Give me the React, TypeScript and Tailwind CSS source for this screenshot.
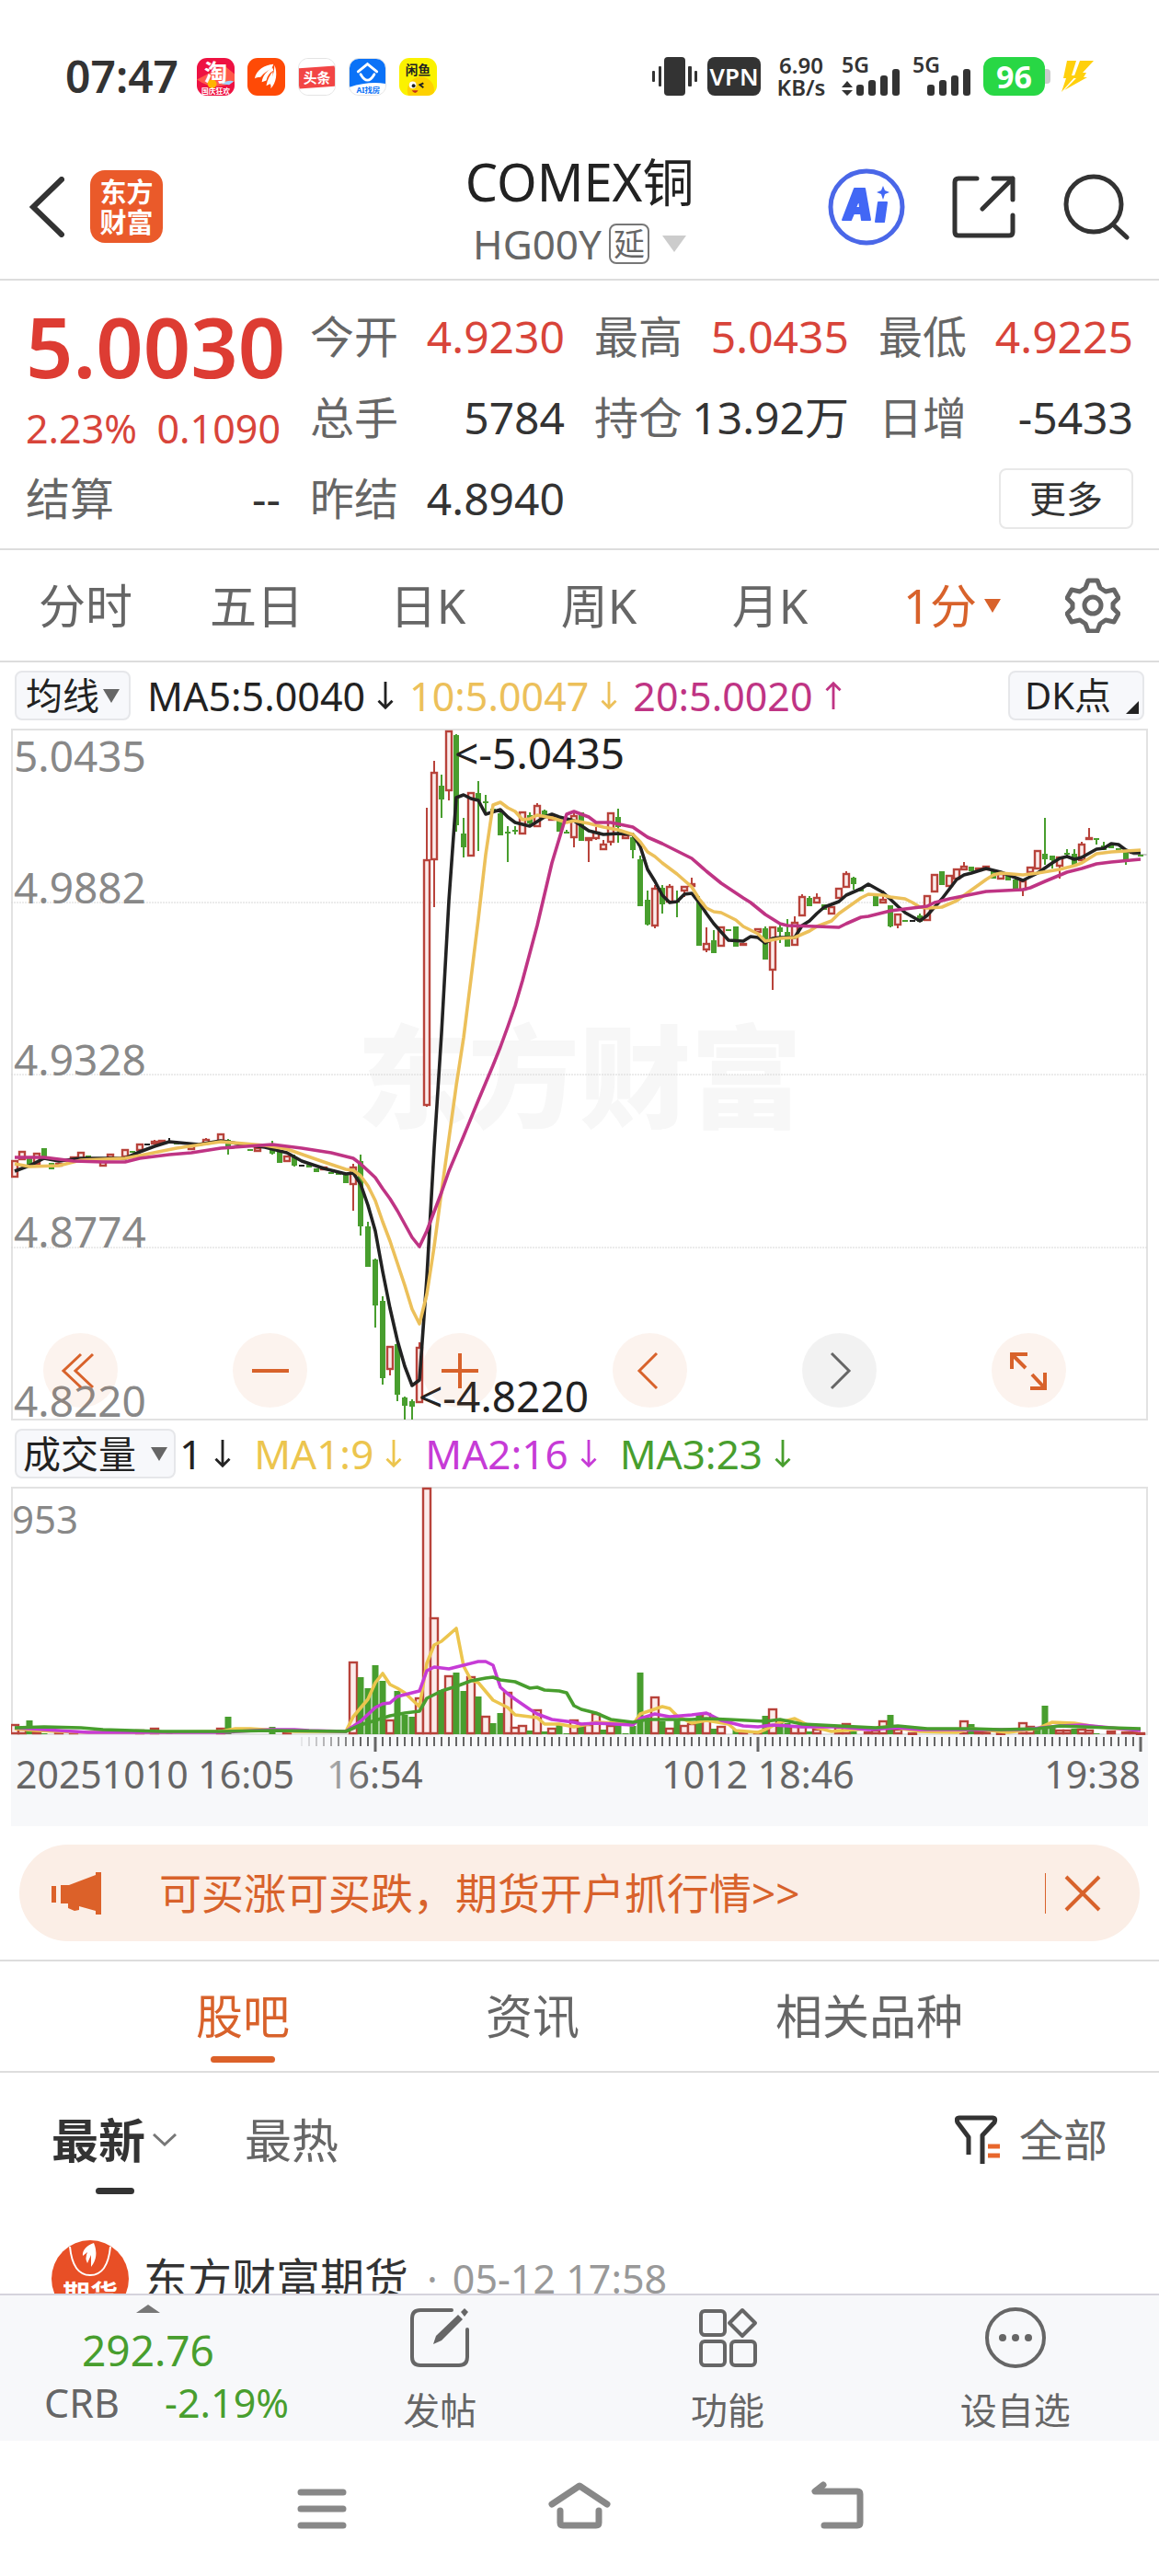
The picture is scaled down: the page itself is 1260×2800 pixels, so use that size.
import type { ReactNode } from "react";

type Kind = "r" | "g" | "k";
type Candle = [number, Kind, number, number, number, number];
type Volume = [number, Kind, number];
type Point = [number, number];

const RED = "#b8433b";
const GREEN = "#489e2e";
const COLORS: Record<Kind, string> = { r: RED, g: GREEN, k: "#222222" };

// Slot, direction, high, body top, body bottom, low
const candles: Candle[] = [
  [0, "r", 482, 482, 499, 499],
  [1, "r", 472, 472, 480, 480],
  [2, "g", 478, 478, 486, 486],
  [3, "r", 474, 474, 485, 485],
  [4, "g", 468, 468, 479, 479],
  [5, "g", 484, 484, 491, 491],
  [6, "r", 485, 485, 487, 487],
  [8, "r", 478, 478, 480, 480],
  [9, "r", 473, 473, 480, 480],
  [10, "g", 476, 476, 479, 479],
  [12, "r", 483, 483, 487, 487],
  [13, "r", 475, 475, 478, 478],
  [15, "r", 470, 470, 477, 477],
  [16, "g", 471, 471, 473, 473],
  [17, "r", 463, 464, 470, 470],
  [18, "k", 463, 463, 465, 465],
  [19, "r", 459, 461, 463, 463],
  [20, "r", 460, 460, 462, 462],
  [21, "k", 457, 460, 462, 462],
  [22, "g", 462, 462, 464, 464],
  [24, "r", 465, 466, 469, 470],
  [26, "r", 457, 459, 463, 463],
  [28, "r", 453, 453, 460, 460],
  [29, "g", 458, 459, 466, 475],
  [31, "g", 464, 464, 465, 465],
  [32, "g", 469, 469, 471, 471],
  [33, "r", 467, 468, 471, 471],
  [35, "g", 460, 463, 474, 475],
  [36, "g", 470, 470, 484, 484],
  [37, "r", 477, 477, 482, 482],
  [38, "g", 475, 477, 487, 488],
  [39, "k", 486, 486, 488, 488],
  [40, "g", 486, 486, 489, 489],
  [41, "g", 490, 490, 494, 494],
  [42, "r", 488, 489, 491, 491],
  [43, "g", 494, 494, 496, 496],
  [44, "g", 495, 495, 497, 497],
  [45, "g", 495, 495, 506, 506],
  [46, "r", 485, 489, 507, 536],
  [47, "g", 475, 482, 553, 563],
  [48, "g", 548, 553, 597, 597],
  [49, "g", 588, 589, 639, 663],
  [50, "g", 629, 634, 718, 725],
  [51, "r", 683, 684, 708, 715],
  [52, "g", 680, 681, 736, 743],
  [53, "g", 738, 739, 748, 763],
  [54, "g", 741, 743, 749, 763],
  [55, "r", 679, 685, 744, 745],
  [56, "r", 98, 155, 421, 423],
  [57, "r", 47, 60, 154, 206],
  [58, "g", 62, 74, 89, 109],
  [59, "r", 14, 15, 79, 90],
  [60, "g", 18, 19, 117, 124],
  [61, "g", 109, 126, 141, 152],
  [62, "r", 81, 82, 150, 151],
  [63, "g", 69, 82, 91, 145],
  [64, "g", 84, 91, 93, 105],
  [65, "g", 99, 99, 101, 101],
  [66, "g", 103, 104, 128, 128],
  [67, "g", 118, 124, 126, 157],
  [68, "g", 118, 122, 124, 127],
  [69, "r", 102, 103, 126, 127],
  [70, "g", 103, 106, 115, 118],
  [71, "r", 93, 96, 118, 119],
  [72, "g", 100, 101, 107, 107],
  [73, "r", 107, 108, 111, 111],
  [74, "g", 108, 109, 124, 124],
  [75, "g", 122, 124, 126, 126],
  [76, "r", 104, 107, 130, 141],
  [77, "g", 103, 103, 134, 134],
  [78, "r", 130, 131, 133, 157],
  [79, "r", 119, 125, 131, 133],
  [80, "r", 133, 138, 143, 143],
  [81, "r", 104, 104, 135, 139],
  [82, "g", 99, 108, 119, 136],
  [83, "r", 127, 128, 131, 131],
  [84, "g", 125, 130, 144, 153],
  [85, "g", 150, 154, 205, 205],
  [86, "g", 188, 198, 225, 226],
  [87, "r", 182, 186, 226, 229],
  [88, "g", 182, 185, 203, 213],
  [89, "r", 181, 184, 200, 200],
  [90, "g", 188, 199, 201, 217],
  [91, "r", 183, 184, 188, 195],
  [92, "r", 174, 181, 183, 184],
  [93, "g", 194, 198, 248, 248],
  [94, "r", 228, 246, 252, 255],
  [95, "g", 231, 242, 256, 256],
  [96, "r", 228, 228, 248, 248],
  [97, "g", 230, 230, 232, 232],
  [98, "g", 227, 227, 249, 249],
  [99, "r", 246, 246, 247, 247],
  [101, "r", 229, 230, 233, 233],
  [102, "g", 227, 229, 263, 263],
  [103, "r", 228, 228, 274, 296],
  [104, "g", 225, 228, 233, 245],
  [105, "g", 219, 233, 249, 249],
  [106, "r", 216, 223, 247, 247],
  [107, "r", 192, 195, 215, 215],
  [108, "g", 194, 196, 205, 205],
  [109, "r", 191, 196, 201, 201],
  [110, "g", 203, 203, 209, 209],
  [111, "r", 206, 206, 213, 213],
  [112, "r", 185, 186, 196, 196],
  [113, "r", 167, 170, 184, 184],
  [114, "g", 173, 174, 181, 187],
  [115, "g", 185, 185, 189, 189],
  [117, "g", 193, 193, 205, 205],
  [118, "r", 188, 198, 201, 201],
  [119, "g", 204, 204, 227, 228],
  [120, "r", 214, 214, 225, 229],
  [121, "g", 220, 220, 222, 222],
  [122, "k", 220, 220, 222, 222],
  [123, "g", 213, 215, 222, 222],
  [124, "r", 194, 194, 220, 220],
  [125, "r", 170, 171, 189, 189],
  [126, "g", 167, 167, 182, 182],
  [127, "r", 171, 172, 183, 183],
  [128, "r", 164, 165, 175, 175],
  [129, "r", 157, 162, 165, 165],
  [130, "g", 162, 162, 167, 167],
  [131, "r", 164, 164, 166, 166],
  [132, "r", 161, 162, 165, 165],
  [133, "g", 167, 167, 175, 175],
  [134, "r", 170, 170, 175, 175],
  [135, "g", 171, 171, 177, 177],
  [136, "g", 175, 176, 186, 186],
  [137, "r", 177, 178, 187, 194],
  [138, "r", 162, 163, 168, 168],
  [139, "r", 145, 145, 164, 164],
  [140, "g", 109, 148, 154, 160],
  [141, "g", 150, 150, 155, 164],
  [142, "r", 151, 152, 161, 175],
  [143, "g", 143, 147, 149, 152],
  [144, "g", 143, 148, 160, 160],
  [145, "r", 135, 138, 155, 155],
  [146, "r", 120, 131, 132, 132],
  [147, "g", 131, 131, 133, 138],
  [148, "g", 135, 139, 144, 144],
  [149, "g", 137, 137, 142, 142],
  [150, "g", 142, 142, 145, 145],
  [151, "g", 145, 145, 156, 160],
  [152, "r", 146, 146, 147, 147],
  [153, "g", 149, 149, 151, 151],
];

const ma5: Point[] = [
  [0, 493], [2, 487], [4, 479], [6, 482], [9, 479], [15, 479], [17, 472], [19, 466], [21, 461], [25, 464],
  [28, 460], [31, 464], [34, 467], [37, 473], [39, 482], [42, 490], [45, 496], [46, 495], [47, 507], [48, 530],
  [49, 558], [50, 602], [51, 642], [52, 677], [53, 705], [54, 726], [55, 720], [56, 609], [57, 468], [58, 343],
  [59, 199], [60, 87], [61, 84], [62, 88], [63, 90], [64, 105], [66, 100], [67, 108], [68, 114], [70, 118],
  [71, 113], [72, 108], [73, 105], [74, 108], [76, 112], [78, 123], [80, 127], [82, 126], [84, 127], [85, 140],
  [86, 165], [87, 178], [88, 193], [89, 201], [90, 200], [91, 192], [92, 191], [93, 201], [94, 213], [95, 224],
  [96, 233], [97, 242], [99, 243], [100, 238], [101, 239], [102, 245], [103, 240], [104, 239], [106, 239],
  [107, 226], [108, 221], [109, 213], [110, 206], [112, 200], [113, 193], [115, 186], [116, 181], [118, 190],
  [120, 205], [121, 212], [123, 221], [124, 215], [126, 197], [128, 176], [129, 171], [130, 169], [132, 164],
  [134, 168], [135, 171], [137, 177], [139, 169], [141, 158], [142, 153], [143, 151], [144, 154], [145, 152],
  [147, 143], [148, 142], [149, 137], [150, 138], [151, 144], [152, 147], [153, 147],
];

const ma10: Point[] = [
  [0, 485], [2, 488], [6, 487], [9, 481], [15, 479], [17, 476], [22, 468], [28, 461], [34, 465], [37, 469],
  [42, 483], [45, 491], [46, 492], [47, 498], [48, 509], [49, 525], [50, 548], [51, 569], [53, 617], [54, 643],
  [55, 659], [56, 627], [57, 575], [58, 515], [59, 458], [60, 400], [61, 348], [62, 284], [63, 219], [64, 149],
  [65, 95], [66, 92], [67, 98], [68, 102], [69, 111], [70, 110], [71, 106], [73, 109], [75, 114], [76, 112],
  [78, 115], [80, 119], [82, 122], [84, 127], [85, 135], [86, 146], [87, 151], [88, 158], [90, 170], [91, 177],
  [92, 184], [93, 197], [94, 207], [95, 211], [96, 212], [98, 220], [99, 227], [101, 235], [102, 243],
  [104, 240], [106, 239], [108, 232], [109, 227], [111, 221], [112, 213], [115, 196], [116, 192], [118, 193],
  [119, 195], [121, 197], [122, 201], [123, 206], [124, 207], [126, 206], [128, 199], [132, 176], [133, 171],
  [134, 169], [137, 171], [139, 169], [142, 165], [144, 161], [145, 158], [147, 148], [149, 146], [153, 144],
];

const ma20: Point[] = [
  [0, 478], [4, 478], [8, 482], [12, 483], [15, 483], [17, 479], [21, 475], [24, 473], [28, 468], [35, 464],
  [39, 468], [43, 473], [46, 479], [47, 485], [49, 500], [50, 512], [51, 523], [52, 536], [54, 565], [55, 575],
  [56, 558], [58, 516], [59, 493], [61, 455], [63, 416], [65, 378], [66, 358], [67, 336], [68, 313], [69, 286],
  [71, 226], [73, 158], [75, 105], [76, 102], [78, 108], [79, 114], [81, 114], [84, 119], [86, 130], [88, 137],
  [92, 153], [94, 167], [96, 180], [99, 196], [100, 201], [102, 214], [104, 224], [105, 226], [109, 227],
  [112, 228], [113, 224], [115, 217], [116, 216], [119, 210], [122, 207], [124, 205], [125, 201], [127, 197],
  [132, 189], [137, 187], [138, 185], [140, 178], [143, 168], [145, 164], [147, 159], [149, 157], [153, 154],
];

const volumes: Volume[] = [
  [0, "r", 10], [1, "r", 5], [2, "g", 15], [3, "r", 2], [4, "g", 1], [6, "r", 2], [8, "r", 2], [17, "r", 4],
  [19, "r", 6], [21, "g", 3], [28, "r", 6], [29, "g", 19], [35, "g", 8], [37, "r", 3], [46, "r", 78],
  [47, "g", 62], [48, "g", 50], [49, "g", 75], [50, "g", 58], [51, "r", 15], [52, "g", 47], [53, "g", 21],
  [54, "g", 19], [55, "r", 39], [56, "r", 267], [57, "r", 126], [58, "g", 48], [59, "r", 63], [60, "g", 67],
  [61, "g", 47], [62, "r", 62], [63, "g", 41], [64, "r", 19], [65, "g", 12], [66, "g", 23], [67, "r", 45],
  [68, "r", 7], [69, "r", 9], [70, "g", 4], [71, "r", 26], [72, "g", 3], [73, "r", 6], [74, "g", 10],
  [75, "g", 1], [76, "r", 15], [77, "g", 12], [78, "r", 10], [79, "r", 22], [80, "g", 5], [81, "r", 9],
  [82, "g", 16], [83, "g", 1], [84, "g", 9], [85, "g", 67], [86, "g", 18], [87, "r", 40], [88, "g", 14],
  [89, "r", 6], [90, "g", 15], [91, "r", 9], [92, "r", 11], [93, "g", 23], [94, "r", 22], [95, "g", 6],
  [96, "r", 8], [98, "g", 5], [99, "r", 2], [101, "r", 2], [102, "g", 20], [103, "r", 27], [104, "g", 12],
  [105, "g", 12], [106, "r", 8], [107, "r", 8], [108, "g", 3], [109, "r", 5], [112, "r", 7], [113, "r", 11],
  [114, "g", 3], [116, "r", 2], [117, "r", 4], [118, "r", 14], [119, "g", 21], [120, "r", 5], [122, "r", 1],
  [129, "r", 14], [130, "g", 11], [131, "r", 3], [132, "r", 2], [134, "r", 1], [137, "r", 12], [138, "r", 8],
  [139, "g", 6], [140, "g", 31], [141, "g", 7], [142, "r", 4], [143, "r", 4], [144, "g", 6], [145, "r", 5],
  [146, "r", 4], [147, "g", 1], [149, "r", 3], [151, "r", 2], [152, "r", 2], [153, "r", 1],
];

const volMa1: Point[] = [
  [0, 5], [3, 3], [6, 2], [10, 1], [20, 1], [28, 2], [30, 5], [32, 5], [34, 4], [38, 2], [45, 2], [46, 18],
  [48, 37], [49, 55], [50, 65], [51, 53], [52, 49], [53, 44], [55, 29], [56, 76], [57, 96], [58, 100], [60, 114],
  [61, 73], [62, 58], [63, 55], [65, 36], [67, 28], [68, 20], [71, 17], [72, 10], [74, 10], [76, 7], [78, 10],
  [79, 12], [82, 11], [84, 9], [85, 21], [88, 29], [89, 27], [90, 19], [92, 11], [94, 14], [97, 10], [98, 3],
  [101, 1], [102, 4], [104, 12], [106, 16], [108, 8], [111, 2], [116, 5], [119, 7], [123, 2], [128, 1], [130, 5],
  [135, 1], [139, 5], [141, 12], [144, 11], [147, 7], [153, 3],
];

const volMa2: Point[] = [
  [0, 6], [6, 3], [10, 1], [28, 1], [35, 4], [38, 4], [40, 3], [45, 2], [47, 13], [49, 28], [50, 32], [51, 33],
  [52, 40], [55, 46], [56, 68], [57, 72], [59, 70], [61, 74], [63, 78], [64, 78], [65, 74], [66, 50], [67, 43],
  [68, 37], [70, 26], [71, 21], [73, 15], [76, 12], [77, 10], [79, 11], [84, 9], [85, 16], [87, 21], [89, 18],
  [92, 20], [94, 22], [96, 14], [99, 8], [101, 7], [103, 9], [107, 7], [112, 7], [116, 4], [120, 6], [123, 4],
  [130, 4], [137, 4], [142, 8], [145, 9], [149, 6], [153, 3],
];

const volMa3: Point[] = [
  [0, 6], [4, 7], [9, 6], [12, 4], [20, 2], [28, 2], [35, 3], [45, 2], [47, 9], [51, 19], [53, 22], [55, 24],
  [56, 38], [58, 46], [60, 51], [62, 57], [64, 60], [65, 61], [66, 58], [68, 56], [70, 49], [71, 50], [72, 47],
  [74, 46], [75, 44], [76, 30], [77, 26], [79, 22], [81, 15], [84, 12], [86, 15], [92, 15], [94, 16], [97, 15],
  [102, 13], [104, 15], [107, 10], [112, 8], [117, 6], [120, 8], [124, 5], [130, 5], [134, 4], [139, 5],
  [142, 8], [145, 7], [153, 5],
];

const slotX = (slot: number) => 16 + slot * 8;

const toPoints = (series: Point[], map = (v: number) => v) =>
  series.map(([slot, v]) => `${slotX(slot)},${map(v)}`).join(" ");

const gridLines = [201, 388, 576];
const priceLabels: [string, number][] = [
  ["5.0435", 59],
  ["4.9882", 202],
  ["4.9328", 389],
  ["4.8774", 576],
  ["4.8220", 760],
];

function PriceChart() {
  return (
    <svg viewBox="12 12 1236 752" className="block h-auto w-full" role="img" aria-label="K线">
      <text x="388" y="436" fontSize="121" fontWeight="900" fill="#f7f7f7">
        东方财富
      </text>
      <rect x="13" y="13" width="1234" height="750" fill="none" stroke="#e2e2e2" strokeWidth="2" />
      {gridLines.map((y) => (
        <line key={y} x1="12" x2="1247" y1={y} y2={y} stroke="#d8d8d8" strokeDasharray="2 1" />
      ))}
      {priceLabels.map(([label, y]) => (
        <text key={label} x="15" y={y} fontSize="46" fill="#888888">
          {label}
        </text>
      ))}
      <line x1="1232" x2="1247" y1="149" y2="149" stroke="#c8c8c8" strokeWidth="2" />
      {candles.map(([slot, kind, high, top, bottom, low]) => {
        const x = slotX(slot);
        const color = COLORS[kind];
        return (
          <g key={slot} stroke={color} strokeWidth="2">
            {high < top && <line x1={x} x2={x} y1={high} y2={top} />}
            {low > bottom && <line x1={x} x2={x} y1={bottom} y2={low} />}
            {kind === "r" ? (
              <rect x={x - 3} y={top} width="6" height={bottom - top} fill="#fbeceb" strokeWidth="2.4" />
            ) : (
              <rect x={x - 3} y={top} width="6" height={bottom - top} fill={color} stroke="none" />
            )}
          </g>
        );
      })}
      <g fill="none" strokeWidth="3.6" strokeLinejoin="round">
        <polyline points={toPoints(ma5)} stroke="#222222" />
        <polyline points={toPoints(ma10)} stroke="#ecc05a" />
        <polyline points={toPoints(ma20)} stroke="#bf3484" />
      </g>
      <g fontSize="46" fill="#222222">
        <text x="494" y="56">{"<-5.0435"}</text>
        <text x="455" y="755">{"<-4.8220"}</text>
      </g>
    </svg>
  );
}

function VolumeChart() {
  const base = 269;
  const flip = (v: number) => base - 1 - v;

  return (
    <svg viewBox="12 0 1236 270" className="block h-auto w-full" role="img" aria-label="成交量">
      <rect x="13" y="1" width="1234" height="268" fill="none" stroke="#e2e2e2" strokeWidth="2" />
      <text x="13" y="51" fontSize="42" fill="#888888">
        953
      </text>
      {volumes.map(([slot, kind, height]) => {
        const x = slotX(slot);
        return kind === "r" ? (
          <rect
            key={slot}
            x={x - 4}
            y={base - height}
            width="8"
            height={Math.max(height - 1, 1)}
            fill="#fbeceb"
            stroke={RED}
            strokeWidth="2.4"
          />
        ) : (
          <rect key={slot} x={x - 3.5} y={base - height} width="7" height={height} fill={GREEN} />
        );
      })}
      <g fill="none" strokeWidth="3.6" strokeLinejoin="round">
        <polyline points={toPoints(volMa1, flip)} stroke="#ecc54e" />
        <polyline points={toPoints(volMa2, flip)} stroke="#c63bd6" />
        <polyline points={toPoints(volMa3, flip)} stroke={GREEN} />
      </g>
    </svg>
  );
}

function TimeAxis() {
  const slots = Array.from({ length: 115 }, (_, n) => n + 39);

  return (
    <svg viewBox="12 0 1236 99" className="block h-auto w-full bg-[#f7f8fa]" role="img" aria-label="时间">
      <defs>
        <linearGradient id="axis-fade" gradientUnits="userSpaceOnUse" x1="355" x2="400" y1="0" y2="0">
          <stop offset="0" stopColor="#b5b5b5" />
          <stop offset="1" stopColor="#666666" />
        </linearGradient>
      </defs>
      {slots.map((slot) => {
        const major = slot === 49 || slot === 101 || slot === 153;
        return (
          <line
            key={slot}
            x1={slotX(slot)}
            x2={slotX(slot)}
            y1="2"
            y2={major ? 18 : 12}
            stroke="#666666"
            strokeWidth={major ? 3 : 2}
            opacity={Math.min(1, (slot - 38) / 9)}
          />
        );
      })}
      <g fontSize="41" fill="#666666">
        <text x="17" y="58">20251010 16:05</text>
        <text x="355" y="58" fill="url(#axis-fade)">16:54</text>
        <text x="824" y="58" textAnchor="middle">1012 18:46</text>
        <text x="1240" y="58" textAnchor="end">19:38</text>
      </g>
    </svg>
  );
}

function Arrow({ up = false }: { up?: boolean }) {
  return (
    <svg viewBox="0 0 20 34" className="mx-3 h-8 w-5 shrink-0" fill="none" stroke="currentColor" strokeWidth="3">
      {up ? <path d="M10 33V3M2 11l8-8 8 8" /> : <path d="M10 1v30M2 23l8 8 8-8" />}
    </svg>
  );
}

function Caret({ className }: { className: string }) {
  return (
    <svg viewBox="0 0 18 14" preserveAspectRatio="none" className={className} fill="currentColor">
      <path d="M0 0h18L9 14z" />
    </svg>
  );
}

function StatusBar() {
  return (
    <div className="mt-[62px] flex h-[42px] shrink-0 items-center justify-between pr-[70px] pl-[71px] text-[#333333]">
      <div className="flex items-center gap-[14px]">
        <span className="mr-[6px] text-[48px] font-semibold leading-[42px]">07:47</span>
        <svg viewBox="0 0 42 42" className="size-[41px] rounded-[11px]">
          <rect width="42" height="42" fill="#ee1142" />
          <path d="M0 24q20 14 42 2v-8L30 8 8 20z" fill="#ff5a4a" />
          <circle cx="17" cy="29" r="5" fill="#ffb400" />
          <path d="M27 29q8-5 14-3l-5 4z" fill="#9fd3ff" />
          <text x="8" y="26" fontSize="26" fontWeight="700" fill="#ffffff">淘</text>
          <text x="5" y="40" fontSize="8" fontWeight="700" fill="#ffffff">国庆狂欢</text>
        </svg>
        <svg viewBox="0 0 42 42" className="size-[41px] rounded-[11px]">
          <rect width="42" height="42" fill="#ff4a06" />
          <path d="M29 7C19 8 10 13 8 23c3-2 5-1 7-2 3-4 7-7 12-9z" fill="#ffffff" />
          <path d="M28 11c-6 3-11 8-12 16l5-2c1-5 4-9 8-11z" fill="#ffffff" />
          <path d="M30 8c4 9 2 20-4 26 1-4-1-5-2-6 4-6 6-12 6-20z" fill="#ffffff" />
          <path d="M28 15c-3 4-6 9-7 16l4-2c3-5 4-9 3-14z" fill="#ffffff" />
        </svg>
        <svg viewBox="0 0 42 42" className="size-[41px] rounded-[11px] border border-[#e4e4e4]">
          <rect width="42" height="42" fill="#ffffff" />
          <path d="M0 11l42-3v24L0 35z" fill="#f24545" />
          <text x="5" y="28" fontSize="16" fontWeight="700" fill="#ffffff">头条</text>
        </svg>
        <svg viewBox="0 0 42 42" className="size-[41px] rounded-[11px] border border-[#e4e4e4]">
          <rect width="42" height="42" fill="#ffffff" />
          <path d="M0 0h42v29q-20-3-42 4z" fill="#0b72f7" />
          <path d="M10 15L21 6l11 9M13 18q8 14 16 0" fill="none" stroke="#ffffff" strokeWidth="3" strokeLinecap="round" />
          <text x="8" y="40" fontSize="9" fontWeight="700" fill="#0b72f7">AI找房</text>
        </svg>
        <svg viewBox="0 0 42 42" className="size-[41px] rounded-[11px]">
          <rect width="42" height="42" fill="#fbf200" />
          <circle cx="24" cy="36" r="15" fill="#fed100" />
          <circle cx="15" cy="30" r="4" fill="#ffffff" />
          <circle cx="16" cy="31" r="2" fill="#222222" />
          <path d="M27 28l-4 2 4 3" fill="none" stroke="#222222" strokeWidth="2" />
          <path d="M14 36h7q-3 6-7 0z" fill="#c33018" />
          <text x="7" y="18" fontSize="14" fontWeight="700" fill="#222222">闲鱼</text>
        </svg>
      </div>
      <div className="flex items-center">
        <svg viewBox="0 0 50 42" className="h-[42px] w-[50px]" fill="#333333">
          <rect x="13" width="23" height="42" rx="4" />
          <rect x="7" y="10" width="3" height="22" rx="1" />
          <rect x="0" y="15" width="3" height="12" rx="1" />
          <rect x="39" y="10" width="4" height="22" rx="1" />
          <rect x="46" y="15" width="3" height="12" rx="1" />
        </svg>
        <span className="ml-[10px] flex h-[42px] w-[58px] items-center justify-center rounded-lg bg-[#333333] text-[26px] font-semibold text-white">
          VPN
        </span>
        <span className="ml-4 flex w-[56px] flex-col text-center text-[24px] font-semibold leading-[24px]">
          <span>6.90</span>
          <span>KB/s</span>
        </span>
        <svg viewBox="0 0 65 42" className="ml-4 h-[42px] w-[65px] overflow-visible" fill="#333333">
          <text x="0" y="17" fontSize="23" fontWeight="600">5G</text>
          <path d="M0 33l6-7 6 7zM0 36h12l-6 6z" />
          <rect x="16" y="30" width="8" height="12" rx="3" />
          <rect x="29" y="25" width="8" height="17" rx="3" />
          <rect x="42" y="20" width="8" height="22" rx="3" />
          <rect x="55" y="13" width="8" height="29" rx="3" />
        </svg>
        <svg viewBox="0 0 65 42" className="ml-3 h-[42px] w-[65px] overflow-visible" fill="#333333">
          <text x="0" y="17" fontSize="23" fontWeight="600">5G</text>
          <rect x="16" y="30" width="8" height="12" rx="3" />
          <rect x="29" y="25" width="8" height="17" rx="3" />
          <rect x="42" y="20" width="8" height="22" rx="3" />
          <rect x="55" y="13" width="8" height="29" rx="3" />
        </svg>
        <span className="ml-3 flex items-center">
          <span className="flex h-[42px] w-[67px] items-center justify-center rounded-xl bg-[#28d745] text-[34px] font-bold text-white">
            96
          </span>
          <span className="h-4 w-[6px] rounded-r bg-[#cccccc]" />
        </span>
        <svg viewBox="0 0 36 36" className="ml-3 size-9" fill="#ffd00c">
          <path d="M6 1h10l-5 16h5L0 35l5-15H2z" />
          <path d="M20 1h15L23 14h4l-3 5h4L3 33l13-13h-3z" />
        </svg>
      </div>
    </div>
  );
}

function Header() {
  return (
    <header className="mt-[60px] flex h-[141px] shrink-0 items-start justify-between border-b-2 border-[#dddddd] px-8">
      <div className="flex h-[121px] flex-1 items-center gap-7">
        <button type="button" aria-label="返回">
          <svg viewBox="0 0 38 66" className="h-[66px] w-[38px]" fill="none" stroke="#333333" strokeWidth="6">
            <path d="M35 3L4 33l31 30" strokeLinecap="round" />
          </svg>
        </button>
        <a
          href="#home"
          className="flex size-[79px] flex-col items-center justify-center rounded-2xl bg-[#ea5a2a] text-[29px] font-bold leading-[33px] text-white"
        >
          <span>东方</span>
          <span>财富</span>
        </a>
      </div>
      <div className="flex flex-col items-center">
        <h1 className="text-[56px] leading-[66px] text-[#222222]">COMEX铜</h1>
        <button type="button" className="flex items-center text-[#666666]">
          <span className="text-[44px] leading-[70px]">HG00Y</span>
          <span className="ml-2 flex size-[44px] items-center justify-center rounded-lg border-2 border-[#777777] text-[34px] leading-none">
            延
          </span>
          <Caret className="ml-[14px] h-[18px] w-[26px] text-[#cccccc]" />
        </button>
      </div>
      <div className="flex h-[121px] flex-1 items-center justify-end gap-[51px]">
        <button type="button" aria-label="AI">
          <svg viewBox="0 0 84 84" className="size-[84px]" fill="#4267f5">
            <circle cx="42" cy="42" r="39" fill="none" stroke="#4a67e8" strokeWidth="5" />
            <path
              d="M29 22h11l6 34h-9l-1-7h-8l-3 7h-9zM34 33l-4 10h5z"
              fillRule="evenodd"
              stroke="#4267f5"
              strokeWidth="2"
              strokeLinejoin="round"
            />
            <path d="M55 37h9l-3 21h-9z" stroke="#4267f5" strokeWidth="2" strokeLinejoin="round" />
            <path d="M60 19l2 5 5 2-5 2-2 6-2-6-5-2 5-2z" />
          </svg>
        </button>
        <button type="button" aria-label="分享">
          <svg
            viewBox="0 0 70 70"
            className="size-[70px]"
            fill="none"
            stroke="#333333"
            strokeWidth="5"
            strokeLinecap="round"
            strokeLinejoin="round"
          >
            <path d="M27 4H7q-4 0-4 4v54q0 4 4 4h55q4 0 4-4V44M45 4h21v23M66 4L33 37" />
          </svg>
        </button>
        <button type="button" aria-label="搜索">
          <svg viewBox="0 0 72 72" className="size-[72px]" fill="none" stroke="#333333" strokeWidth="5" strokeLinecap="round">
            <circle cx="33" cy="33" r="30" />
            <path d="M54 55l15 14" />
          </svg>
        </button>
      </div>
    </header>
  );
}

interface StatProps {
  label: string;
  value: string;
  rising?: boolean;
}

function Stat({ label, value, rising }: StatProps) {
  return (
    <dl className="flex h-[88px] items-center justify-between text-[48px] whitespace-nowrap">
      <dt className="text-[#666666]">{label}</dt>
      <dd className={rising ? "text-[#d8443a]" : "text-[#333333]"}>{value}</dd>
    </dl>
  );
}

function Quote() {
  return (
    <section className="grid shrink-0 grid-cols-4 gap-x-8 border-b-2 border-[#dddddd] px-7 pt-[17px] pb-[10px] leading-none">
      <div className="row-span-2 pt-2 text-[#dd3c33]">
        <p className="text-[90px] font-semibold leading-[92px]">5.0030</p>
        <p className="mt-4 flex justify-between text-[43px] leading-[56px] text-[#d8443a]">
          <span>2.23%</span>
          <span>0.1090</span>
        </p>
      </div>
      <Stat label="今开" value="4.9230" rising />
      <Stat label="最高" value="5.0435" rising />
      <Stat label="最低" value="4.9225" rising />
      <Stat label="总手" value="5784" />
      <Stat label="持仓" value="13.92万" />
      <Stat label="日增" value="-5433" />
      <Stat label="结算" value="--" />
      <Stat label="昨结" value="4.8940" />
      <div className="col-start-4 flex items-center justify-end">
        <button type="button" className="h-[66px] rounded-lg border-2 border-[#e8e8e8] px-[31px] text-[40px] text-[#333333]">
          更多
        </button>
      </div>
    </section>
  );
}

function PeriodTabs() {
  return (
    <nav className="flex h-[122px] shrink-0 items-center border-b-2 border-[#dddddd] text-[51px] text-[#666666]">
      {["分时", "五日", "日K", "周K", "月K"].map((label) => (
        <button key={label} type="button" className="flex-1">
          {label}
        </button>
      ))}
      <button type="button" className="flex flex-1 items-center justify-center gap-2 text-[#d8622b]">
        <span className="ml-6">1分</span>
        <Caret className="h-[15px] w-[18px]" />
      </button>
      <button type="button" aria-label="设置" className="flex w-36 justify-center">
        <svg viewBox="0 0 60 60" className="size-[60px]" fill="none" stroke="#666666" strokeWidth="5" strokeLinejoin="round">
          <path d="M25 3h10l3 8 6 4 9-2 5 9-6 6v5l6 6-5 9-9-2-6 4-3 8H25l-3-8-6-4-9 2-5-9 6-6v-5l-6-6 5-9 9 2 6-4z" />
          <circle cx="30" cy="30" r="9" />
        </svg>
      </button>
    </nav>
  );
}

function RoundButton({ label, muted, children }: { label: string; muted?: boolean; children: ReactNode }) {
  return (
    <button
      type="button"
      aria-label={label}
      className={
        muted
          ? "flex size-[81px] items-center justify-center rounded-full bg-black/5 text-[#666666]"
          : "flex size-[81px] items-center justify-center rounded-full bg-[#dc6420]/8 text-[#d8622b]"
      }
    >
      <svg viewBox="0 0 44 44" className="size-11" fill="none" stroke="currentColor" strokeWidth="4">
        {children}
      </svg>
    </button>
  );
}

function ChartControls() {
  return (
    <div className="absolute right-[89px] bottom-[14px] left-[35px] flex justify-between">
      <RoundButton label="最早">
        <path d="M22 4L3 22l19 18M35 4L16 22l19 18" strokeWidth="3" />
      </RoundButton>
      <RoundButton label="缩小">
        <path d="M2 22h40" />
      </RoundButton>
      <RoundButton label="放大">
        <path d="M2 22h40M22 3v38" />
      </RoundButton>
      <RoundButton label="向前">
        <path d="M30 3L11 22l19 19" strokeWidth="3" />
      </RoundButton>
      <RoundButton label="向后" muted>
        <path d="M14 3l19 19-19 19" strokeWidth="3" />
      </RoundButton>
      <RoundButton label="全屏">
        <path d="M4 20V4h17M4 4l15 15M40 24v17H24M40 41L26 26" strokeWidth="4" />
      </RoundButton>
    </div>
  );
}

function Charts() {
  return (
    <section className="shrink-0 px-3 leading-none">
      <div className="flex h-[72px] items-center pr-1 pl-1 text-[43px] whitespace-nowrap">
        <button
          type="button"
          className="mr-[18px] flex h-[54px] items-center gap-1 rounded-lg border-2 border-[#e6e7ea] bg-[#f7f8fb] px-[10px] text-[40px] text-[#222222]"
        >
          均线
          <Caret className="h-[15px] w-[18px] text-[#666666]" />
        </button>
        <span className="flex items-center text-[#222222]">
          MA5:5.0040
          <Arrow />
        </span>
        <span className="ml-1 flex items-center text-[#ecc05a]">
          10:5.0047
          <Arrow />
        </span>
        <span className="ml-1 flex items-center text-[#bf3484]">
          20:5.0020
          <Arrow up />
        </span>
        <button
          type="button"
          className="ml-auto flex h-[54px] items-end rounded-lg border-2 border-[#e6e7ea] bg-[#f7f8fb] pr-1 pb-[5px] pl-4 text-[40px] text-[#222222]"
        >
          DK点
          <svg viewBox="0 0 14 14" className="ml-4 size-[14px]" fill="#222222">
            <path d="M14 0v14H0z" />
          </svg>
        </button>
      </div>
      <div className="relative">
        <PriceChart />
        <ChartControls />
      </div>
      <div className="flex h-[72px] items-center pl-1 text-[44px] whitespace-nowrap">
        <button
          type="button"
          className="mr-1 flex h-[54px] items-center gap-4 rounded-lg border-2 border-[#e6e7ea] bg-[#f7f8fb] px-[7px] text-[41px] text-[#222222]"
        >
          成交量
          <Caret className="h-[15px] w-[18px] text-[#666666]" />
        </button>
        <span className="flex items-center text-[#222222]">
          1
          <Arrow />
        </span>
        <span className="ml-3 flex items-center text-[#ecc54e]">
          MA1:9
          <Arrow />
        </span>
        <span className="ml-3 flex items-center text-[#c63bd6]">
          MA2:16
          <Arrow />
        </span>
        <span className="ml-3 flex items-center text-[#489e2e]">
          MA3:23
          <Arrow />
        </span>
      </div>
      <VolumeChart />
      <TimeAxis />
    </section>
  );
}

function Banner() {
  return (
    <aside className="mx-[21px] mt-5 mb-5 flex h-[105px] shrink-0 items-center rounded-full bg-[#fbeee6] pr-[42px] pl-[35px] text-[#d8622b]">
      <svg viewBox="0 0 54 46" className="h-[46px] w-[54px]" fill="#dc6129">
        <path d="M0 15h5v18H0zM10 14h9L48 3V0h6v46h-6v-4L30 37v4l-5 1-7-3v-5h-8z" />
      </svg>
      <a href="#account" className="ml-[63px] flex-1 text-[46px] whitespace-nowrap">
        可买涨可买跌，期货开户抓行情&gt;&gt;
      </a>
      <button type="button" aria-label="关闭" className="border-l border-[#d8622b] py-[2px] pl-5">
        <svg viewBox="0 0 40 40" className="size-10" fill="none" stroke="currentColor" strokeWidth="4">
          <path d="M2 2l36 36M38 2L2 38" />
        </svg>
      </button>
    </aside>
  );
}

function FeedTabs() {
  return (
    <nav className="flex h-[123px] shrink-0 items-stretch justify-evenly border-y-2 border-[#dddddd] text-[51px] text-[#666666]">
      <button type="button" className="relative text-[#d8622b]">
        股吧
        <span className="absolute inset-x-4 bottom-[9px] h-[7px] rounded-full bg-[#dc6129]" />
      </button>
      <button type="button">资讯</button>
      <button type="button">相关品种</button>
    </nav>
  );
}

function Feed() {
  return (
    <section className="min-h-0 flex-1 overflow-hidden">
      <div className="flex h-[146px] items-center gap-[74px] px-14 text-[51px] text-[#666666]">
        <button type="button" className="relative flex h-full items-center gap-2 font-bold text-[#333333]">
          最新
          <svg viewBox="0 0 26 14" className="h-[14px] w-[26px]" fill="none" stroke="#777777" strokeWidth="3">
            <path d="M1 1l12 11L25 1" />
          </svg>
          <span className="absolute bottom-[14px] left-12 h-[7px] w-[42px] rounded-full bg-[#333333]" />
        </button>
        <button type="button">最热</button>
        <button type="button" className="ml-auto flex items-center gap-5 text-[48px]">
          <svg viewBox="0 0 50 54" className="h-[54px] w-[50px]" fill="none" stroke="#333333" strokeWidth="5">
            <path d="M15 43V24L3 8q-2-5 2-5h36q4 0 2 5L30 22v31" strokeLinejoin="round" />
            <path d="M36 34h13M36 44h13" stroke="#e8672c" />
          </svg>
          全部
        </button>
      </div>
      <article className="flex items-center px-14 pt-9">
        <svg viewBox="0 0 84 84" className="size-[84px] shrink-0">
          <circle cx="42" cy="42" r="42" fill="#e84f26" />
          <path d="M20 7q3 31 22 31T64 7" fill="none" stroke="#ffffff" strokeWidth="2" />
          <path d="M46 3c-7 2-13 8-12 14l5-4q-3 7 0 12l4-9v13q9-11 3-26z" fill="#ffffff" />
          <text x="12" y="70" fontSize="30" fontWeight="700" fill="#ffffff">期货</text>
        </svg>
        <h2 className="ml-4 text-[48px] text-[#333333]">东方财富期货</h2>
        <span className="ml-5 text-[44px] text-[#999999]">·</span>
        <time className="ml-4 text-[43px] text-[#999999]">05-12 17:58</time>
      </article>
    </section>
  );
}

function ActionBar() {
  return (
    <footer className="flex h-[160px] shrink-0 border-t-2 border-[#d5d3dc] bg-[#f7f8fa] text-[40px] leading-none text-[#666666]">
      <a href="#crb" className="flex w-[322px] flex-col items-center pt-[10px]">
        <Caret className="h-[9px] w-[26px] rotate-180 text-[#777777]" />
        <span className="mt-3 text-[46px] leading-[56px] text-[#489e2e]">292.76</span>
        <span className="mr-2 flex w-[266px] justify-between self-end text-[43px] leading-[60px]">
          <span>CRB</span>
          <span className="text-[#489e2e]">-2.19%</span>
        </span>
      </a>
      <button type="button" className="flex flex-1 flex-col items-center gap-[26px] pt-[13px]">
        <svg viewBox="0 0 66 66" className="size-[66px]" fill="none" stroke="#666666" strokeWidth="4" strokeLinecap="round">
          <path d="M46 3H12q-9 0-9 9v42q0 9 9 9h42q9 0 9-9V24" />
          <path d="M26 40l3-9 24-23 5 5-23 23z" fill="#666666" stroke="none" />
          <path d="M56 5l4-4 4 4-4 5z" fill="#666666" stroke="none" />
        </svg>
        发帖
      </button>
      <button type="button" className="flex flex-1 flex-col items-center gap-[26px] pt-[13px]">
        <svg viewBox="0 0 66 66" className="size-[66px]" fill="none" stroke="#666666" strokeWidth="4" strokeLinejoin="round">
          <rect x="4" y="4" width="26" height="26" rx="4" />
          <rect x="4" y="37" width="26" height="26" rx="4" />
          <rect x="37" y="37" width="26" height="26" rx="4" />
          <path d="M49 3l14 14-14 14-14-14z" />
        </svg>
        功能
      </button>
      <button type="button" className="flex flex-1 flex-col items-center gap-[26px] pt-[13px]">
        <svg viewBox="0 0 66 66" className="size-[66px]" fill="#666666">
          <circle cx="33" cy="33" r="31" fill="none" stroke="#666666" strokeWidth="4" />
          <circle cx="19" cy="33" r="4" />
          <circle cx="33" cy="33" r="4" />
          <circle cx="47" cy="33" r="4" />
        </svg>
        设自选
      </button>
    </footer>
  );
}

function SystemNav() {
  return (
    <nav className="grid h-[147px] shrink-0 grid-cols-3 px-[210px] pt-[44px]">
      <button type="button" aria-label="菜单" className="flex items-start justify-center">
        <svg viewBox="0 0 70 52" className="h-[52px] w-[70px]" stroke="#888888" strokeWidth="7" strokeLinecap="round">
          <path d="M12 12h46M12 30h46M12 48h46" />
        </svg>
      </button>
      <button type="button" aria-label="主页" className="flex items-start justify-center">
        <svg
          viewBox="0 0 70 52"
          className="h-[52px] w-[70px]"
          fill="none"
          stroke="#888888"
          strokeWidth="7"
          strokeLinecap="round"
          strokeLinejoin="round"
        >
          <path d="M5 25L35 5l30 20M14 32v13q0 3 3 3h36q3 0 3-3V32" />
        </svg>
      </button>
      <button type="button" aria-label="返回" className="flex items-start justify-center">
        <svg
          viewBox="0 0 70 52"
          className="h-[52px] w-[70px]"
          fill="none"
          stroke="#888888"
          strokeWidth="7"
          strokeLinecap="round"
          strokeLinejoin="round"
        >
          <path d="M20 4l-9 7h46q3 0 3 3v31q0 3-3 3H21" />
        </svg>
      </button>
    </nav>
  );
}

export default function App() {
  return (
    <div className="flex h-screen flex-col overflow-hidden bg-white font-['Noto_Sans','Noto_Sans_CJK_SC',sans-serif]">
      <StatusBar />
      <Header />
      <Quote />
      <PeriodTabs />
      <Charts />
      <Banner />
      <FeedTabs />
      <Feed />
      <ActionBar />
      <SystemNav />
    </div>
  );
}
